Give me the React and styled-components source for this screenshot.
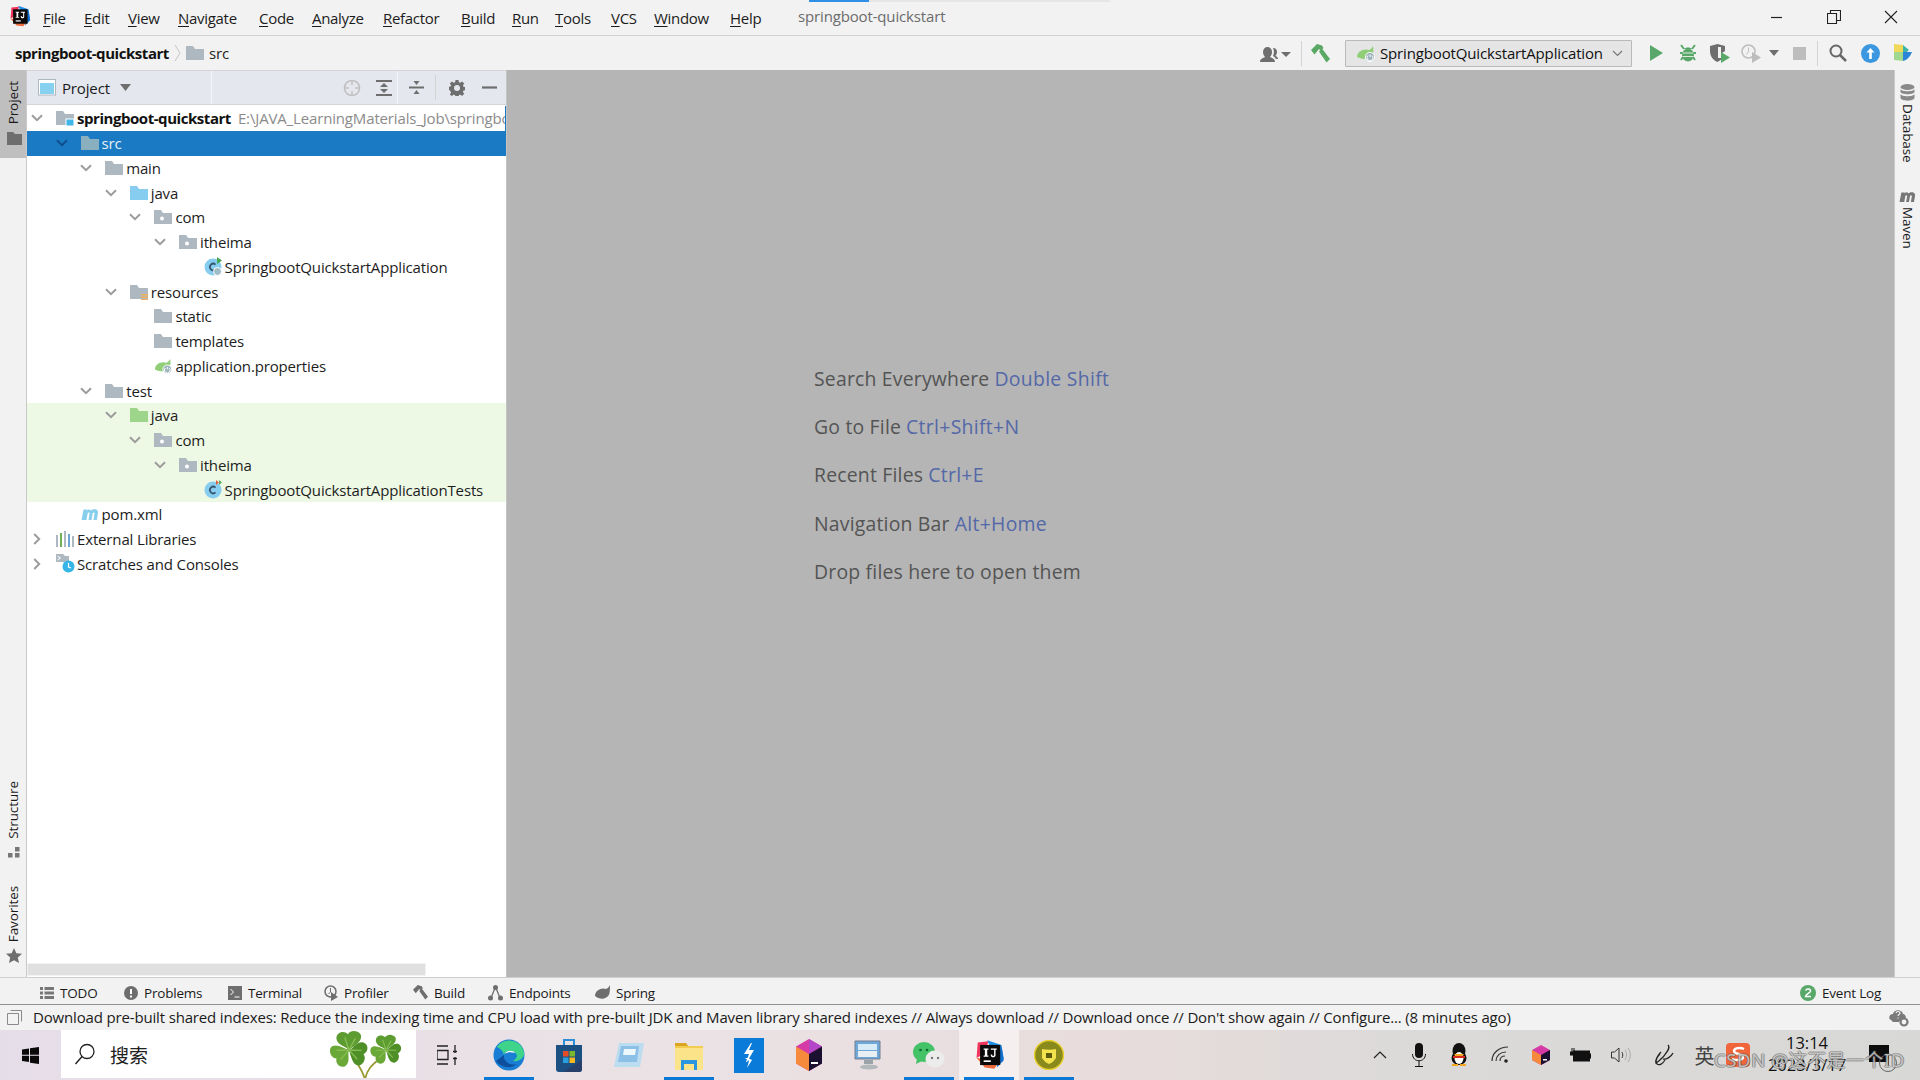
import React from "react";
import styled, { createGlobalStyle } from "styled-components";

const Global = createGlobalStyle`
  html, body { margin: 0; padding: 0; background: #f2f2f2; }
  * { box-sizing: border-box; }
  #root { width: 1920px; height: 1080px; }
`;
const UI = `"Open Sans", "Noto Sans", "Noto Sans CJK SC", sans-serif`;

const Screen = styled.div`
  position: relative; width: 1920px; height: 1080px; overflow: hidden; display: flex; flex-direction: column;
  font-family: ${UI}; font-size: 15px; letter-spacing: -0.15px; color: #1a1a1a; background: #f2f2f2;
`;
const TitleBar = styled.header`
  position: relative; height: 36px; flex: none; display: flex; align-items: center; padding: 2px 0 0 8px; border-bottom: 1px solid #d1d1d1;
`;
const Progress = styled.div`
  position: absolute; top: 0; left: 809px; width: 301px; height: 2px; background: #e6e6e6;
  &::before { content: ""; display: block; width: 60px; height: 2px; background: #2f8fe6; }
`;
const AppLogo = styled.div` width: 27px; height: 26px; flex: none; margin-top: -4px; display: flex; align-items: center; `;
const LogoGap = styled.div` width: 8px; flex: none; `;
const MenuItem = styled.span` width: ${p => p.$w}px; flex: none; white-space: nowrap; color: #1c1c1c; letter-spacing: -0.3px; margin-top: -1px; u { text-underline-offset: 2px; text-decoration-thickness: 1px; }`;
const WindowTitle = styled.span` color: #6b6b6b; flex: 1; margin-top: -5px; `;
const WinControls = styled.div` display: flex; align-items: center; margin-top: -3px; `;
const WinBtn = styled.div` width: 57.5px; height: 20px; display: flex; justify-content: center; align-items: center; `;

const NavBar = styled.nav`
  height: 34px; flex: none; display: flex; align-items: center; padding-left: 15px;
`;
const Crumb = styled.b` font-weight: 700; color: #111; letter-spacing: -0.45px; `;
const CrumbSep = styled.span` margin: 0 5px 0 5px; display: flex; `;
const CrumbLabel = styled.span` margin-left: 5px; color: #222; flex: 1; `;
const NavTools = styled.div` display: flex; align-items: center; height: 100%; `;
const NavSlot = styled.div` width: ${p => p.$w}px; flex: none; display: flex; justify-content: center; align-items: center; `;
const VSep = styled.div` width: 1px; height: 25px; background: #d4d4d4; flex: none; `;
const RunCombo = styled.div`
  width: 287px; height: 27px; flex: none; margin: 0 8px 0 6px; border: 1px solid #b9b9b9; background: #e5e5e5; border-radius: 1px;
  display: flex; align-items: center; gap: 4px; padding: 0 8px 0 10px; color: #111;
  span { flex: 1; }
`;

const Main = styled.div` flex: 1; min-height: 0; display: flex; `;
const Stripe = styled.aside`
  width: ${p => p.$w}px; flex: none; display: flex; flex-direction: column; justify-content: space-between; background: #f2f2f2;
  border-${p => p.$side}: 1px solid #c9c9c9; font-size: 13.500px; letter-spacing: -0.1px;
`;
const StripeGroup = styled.div` display: flex; flex-direction: column; padding-bottom: ${p => p.$pb || 0}px; `;
const StripeBtn = styled.div`
  display: flex; flex-direction: column; align-items: center; gap: ${p => p.$gap || 6}px; padding: ${p => p.$pad};
  background: ${p => p.$active ? "#bfbfbf" : "transparent"};
`;
const VText = styled.span`
  writing-mode: vertical-rl; transform: ${p => p.$flip ? "rotate(180deg)" : "none"}; line-height: 1; white-space: nowrap;
`;

const Panel = styled.section` width: 480px; flex: none; display: flex; flex-direction: column; background: #fff; border-right: 1px solid #c4c4c4; `;
const PanelHead = styled.div`
  height: 35px; flex: none; display: flex; align-items: center; background: #e4e7ee; border-top: 1px solid #d4d4d4; border-bottom: 1px solid #d4d4d4;
`;
const HeadCell = styled.div`
  width: ${p => p.$w}px; height: 100%; flex: none; display: flex; align-items: center; justify-content: ${p => p.$end ? "flex-end" : "flex-start"};
  padding-left: ${p => p.$pl || 0}px; border-right: 1px solid #f4f5f8;
`;
const HeadLabel = styled.span` margin-left: 6px; width: 58px; `;
const Tree = styled.div` flex: 1; min-height: 0; overflow: hidden; padding-top: 1px; `;
const Row = styled.div`
  position: relative; height: 24.75px; display: flex; align-items: center; white-space: nowrap; overflow: hidden; width: 478.5px;
  padding-left: ${p => p.$level * 24.6}px;
  background: ${p => p.$sel ? "#1a7ac4" : p.$test ? "#eef9e5" : "transparent"};
  color: ${p => p.$sel ? "#e8f1f8" : "#1d1d1d"};
`;
const Chev = styled.span` width: 20px; height: 16px; flex: none; display: flex; justify-content: center; align-items: center; `;
const RowIcon = styled.span` width: 21px; margin-left: 9px; flex: none; display: flex; align-items: center; `;
const RootName = styled.b` font-weight: 700; color: #111; letter-spacing: -0.45px; `;
const RootPath = styled.span` color: #8b8b8b; margin-left: 7px; `;
const RootMark = styled.span` position: absolute; right: 0; top: 0; width: 1px; height: 100%; background: #1a7ac4; `;
const HScroll = styled.div` height: 13px; width: 398.5px; flex: none; margin-bottom: 1px; background: #e0e0e0; border: 1px solid #f2f2f2; `;

const Editor = styled.main` flex: 1; min-width: 0; background: #b5b5b5; padding: 295px 0 0 307px; font-size: 19.4px; letter-spacing: 0.2px; color: #545454; `;
const Hint = styled.div` height: 48.2px; white-space: nowrap; `;
const Key = styled.span` color: #5468a8; margin-left: 5px; letter-spacing: 0.3px; `;

const ToolBar = styled.div`
  height: 27px; flex: none; display: flex; align-items: center; border-top: 1px solid #cfcfcf; font-size: 13.5px; letter-spacing: -0.2px; padding: 3px 38px 0 0;
`;
const ToolItem = styled.div` display: flex; align-items: center; gap: 6px; margin-left: ${p => p.$ml || 0}px; width: ${p => p.$w}px; flex: none; white-space: nowrap; `;
const Spring = styled.div` flex: 1; `;
const StatusBar = styled.div`
  height: 26px; flex: none; display: flex; align-items: center; padding: 0 11px 1px 7px; border-top: 1px solid #919191;
  span { flex: 1; margin-left: 11px; white-space: nowrap; color: #1b1b1b; letter-spacing: -0.16px; }
`;

const TaskBar = styled.footer`
  position: relative; height: 50px; flex: none; display: flex; align-items: center;
  background: linear-gradient(90deg, #e5dde8 0%, #ebe2e5 35%, #e8dcdc 58%, #dcdad9 72%, #d8d8d6 100%);
`;
const StartBtn = styled.div` width: 61px; height: 100%; flex: none; display: flex; justify-content: center; align-items: center; `;
const SearchBox = styled.div`
  width: 355px; height: 48px; align-self: flex-start; flex: none; background: #fff; display: flex; align-items: center; padding-left: 13px; gap: 14px;
  font-family: "Noto Sans CJK SC", sans-serif; font-size: 19px; letter-spacing: 0; color: #222; position: relative; overflow: hidden;
`;
const Clover = styled.div` position: absolute; left: 266px; top: 0; `;
const TaskApps = styled.div` display: flex; height: 100%; margin-left: 3px; `;
const TaskApp = styled.div`
  position: relative; width: 60px; height: 100%; flex: none; display: flex; justify-content: center; align-items: center;
  background: ${p => p.$active ? "#f5f0ef" : "transparent"};
  &::after { content: ""; display: ${p => p.$open ? "block" : "none"}; position: absolute; left: 5px; right: 5px; bottom: 0; height: 3px; background: #0a78d4; }
`;
const Tray = styled.div` flex: 1; display: flex; align-items: center; height: 100%; justify-content: flex-end; padding-right: 31px; `;
const TraySlot = styled.div` width: ${p => p.$w}px; flex: none; display: flex; justify-content: center; align-items: center; height: 100%; font-family: "Noto Sans CJK SC", sans-serif; font-size: 20px; color: #444; letter-spacing: 0; `;
const Clock = styled.div` width: 108px; flex: none; display: flex; flex-direction: column; align-items: center; font-size: 16.5px; letter-spacing: 0; line-height: 22px; color: #111; padding-bottom: 3px; white-space: nowrap; `;
const Notify = styled.div` position: relative; width: 20px; height: 17px; background: #0c0c0c; margin: 0 0 3px 8px; flex: none; `;
const NotifyBadge = styled.div`
  position: absolute; left: 10px; top: 9px; width: 18px; height: 18px; border-radius: 50%; border: 1px solid #666;
  display: flex; justify-content: center; align-items: center;
  &::after { content: ""; width: 2px; height: 8px; background: #333; }
`;
const Watermark = styled.div`
  position: absolute; z-index: 2; left: 1714px; top: 16px; font-size: 18.500px; letter-spacing: 0.6px; white-space: nowrap;
  color: rgba(255,255,255,.6); text-shadow: 1px 0 0 rgba(85,85,85,.55), -1px 0 0 rgba(85,85,85,.55), 0 1px 0 rgba(85,85,85,.4), 0 -1px 0 rgba(85,85,85,.4);
  font-family: "Noto Sans", "Noto Sans CJK SC", sans-serif;
`;

/* Icons */
const Folder = ({ c = "#aeb8c0", dot, badge }) => (
  <svg width="18" height="16" viewBox="0 0 18 16">
    <path d="M0 1h7l2 3h9v11H0z" fill={c} />
    {dot && <circle cx="8" cy="9.5" r="2" fill="#fff" />}
    {badge === "root" && <rect x="10" y="9" width="8" height="7" fill="#3fb5e8" stroke="#fff" />}
    {badge === "res" && <g fill="#f0b060"><rect x="11" y="10" width="7" height="1.5" /><rect x="11" y="12.5" width="7" height="1.5" /><rect x="11" y="15" width="7" height="1" /></g>}
  </svg>
);
const ChevDown = ({ c = "#9c9c9c" }) => <svg width="12" height="8" viewBox="0 0 12 8"><path d="M1 1.2l5 5 5-5" fill="none" stroke={c} strokeWidth="2" /></svg>;
const ChevRight = () => <svg width="8" height="12" viewBox="0 0 8 12"><path d="M1.2 1l5 5-5 5" fill="none" stroke="#9c9c9c" strokeWidth="2" /></svg>;
const ClassIcon = ({ test }) => (
  <svg width="19" height="19" viewBox="0 0 19 19">
    <circle cx="9" cy="10" r="8.5" fill="#86cdf0" />
    <path d="M11.5 7.6a3.3 3.3 0 1 0 0 4.8" fill="none" stroke="#35566e" strokeWidth="1.7" />
    {test ? <g><path d="M12 0v5l3-2.5z" fill="#e0603c" /><path d="M15 0v5l3-2.5z" fill="#5aab62" /></g> : <g><path d="M13 0v7l5-3.5z" fill="#45a84e" /><circle cx="13.5" cy="14.5" r="4" fill="#9fbcc8" stroke="#fff" /></g>}
  </svg>
);
const Leaf = ({ w = 20 }) => (
  <svg width={w} height={w * .85} viewBox="0 0 20 17">
    <path d="M1 12C1 6 8 3 13 5c2-1 3-2 4-4 1 5 0 9-3 11-4 3-9 2-13 0z" fill="#90cf78" />
    <circle cx="14" cy="12" r="4.6" fill="#9db4bd" stroke="#fff" />
    <path d="M14 9.5v2.500M12 10.5a3 3 0 1 0 4 0" fill="none" stroke="#fff" />
  </svg>
);
const Maven = ({ c = "#88cfee", w = 18 }) => (
  <svg width={w} height={w * .67} viewBox="0 0 18 12">
    <path d="M0.500 12L2.500 1.500h3.500l-.2 1C7 1 9 1 10 2.500 11.500 1 15 .5 16.500 2.500c.7 1 .6 2 .4 3L15.800 12h-3.300l1.100-6.500c.2-1.500-1.600-1.500-2 0L10.500 12H7.500l1.100-6.500c.2-1.500-1.600-1.500-2 0L5.500 12z" fill={c} />
  </svg>
);
const LibIcon = () => (
  <svg width="18" height="16" viewBox="0 0 18 16">
    <rect x="0" y="4" width="2" height="12" fill="#aeb8c0" /><rect x="4" y="2" width="2" height="14" fill="#72b257" />
    <rect x="8" y="0" width="2" height="16" fill="#aeb8c0" /><rect x="12" y="3" width="2" height="13" fill="#6aa5d8" /><rect x="16" y="5" width="2" height="11" fill="#aeb8c0" />
  </svg>
);
const ScratchIcon = () => (
  <svg width="19" height="19" viewBox="0 0 19 19">
    <path d="M0 0h7l2 2h4v6H0z" fill="#aeb8c0" /><path d="M1.500 2l3 2-3 2" stroke="#fff" fill="none" />
    <circle cx="12.500" cy="12.500" r="6" fill="#36b5e6" /><path d="M12.500 9v4l2.500 1" stroke="#fff" strokeWidth="1.200" fill="none" />
  </svg>
);
const IdeaLogo = ({ s = 27 }) => (
  <svg width={s} height={s} viewBox="0 0 27 27">
    <path d="M4 3l9-1-3 10-7 4z" fill="#f0355c" /><path d="M12 1l12 4 2 12-8-3z" fill="#1d8ee8" /><path d="M3 16l7 8 8 1 5-7z" fill="#ef6a3c" /><path d="M24 6l2 12-6 6z" fill="#126fd0" />
    <rect x="6" y="5" width="17" height="17" fill="#0a0a0a" />
    <path d="M9 8h4v1h-1v5h1v1H9v-1h1V9H9zM15 8h5v1h-1v5c0 1-1 1.500-2 1.500s-2-.5-2-1.500v-1l1.200 0v1c0 .3 1.600.3 1.600 0V9H15z" fill="#fff" />
    <rect x="9" y="18" width="6" height="1.400" fill="#fff" />
  </svg>
);
const Svg = ({ w, h = w, children }) => <svg width={w} height={h} viewBox={`0 0 ${w} ${h}`}>{children}</svg>;
const Gear = ({ c = "#6e6e6e", s = 16 }) => (
  <svg width={s} height={s} viewBox="0 0 16 16">
    <path fill={c} fillRule="evenodd" d="M6.500 0h3l.4 2.200 1.300.6L13.100 1.500l2.100 2.100-1.300 1.900.6 1.300 2.200.4v3l-2.200.4-.6 1.300 1.300 1.900-2.100 2.100-1.900-1.300-1.300.6-.4 2.200h-3l-.4-2.200-1.300-.6-1.900 1.300L.800 14.400l1.300-1.900-.6-1.300L0 9.800v-3l1.500-.3.600-1.300L.8 3.600 2.900 1.500l1.900 1.300 1.300-.6zM8 5a3 3 0 1 0 0 6 3 3 0 0 0 0-6z" />
  </svg>
);
const Hammer = ({ c = "#5aa863", s = 19 }) => (
  <svg width={s} height={s} viewBox="0 0 19 19">
    <path d="M0 6L6 0l5 1.500L12.500 4l-3 2.500L8 5 3.500 10.500z" fill={c} /><path d="M8 7.500l3-3L19 15l-3.500 3.500z" fill={c} />
  </svg>
);
const Heart = ({ t, fill = "#5c9c30" }) => (
  <g transform={t}>
    <path d="M0 0C-3 -4 -11 -4 -12 -11C-12 -17 -5 -19 -1 -15C1 -19 8 -19 11 -15C14 -9 5 -4 0 0z" fill={fill} />
    <path d="M0 0L-4 -12M0 0L6 -11" stroke="#86bb50" strokeWidth="1.400" fill="none" />
  </g>
);

const menu = [["File", 41], ["Edit", 44], ["View", 50], ["Navigate", 81], ["Code", 53], ["Analyze", 71], ["Refactor", 78], ["Build", 51], ["Run", 43], ["Tools", 56], ["VCS", 43], ["Window", 76], ["Help", 68]];

const App = () => (
  <Screen>
    <Global />
    <TitleBar>
      <Progress />
      <AppLogo><IdeaLogo s={23} /></AppLogo>
      <LogoGap />
      {menu.map(([m, w]) => <MenuItem key={m} $w={w}><u>{m[0]}</u>{m.slice(1)}</MenuItem>)}
      <WindowTitle>springboot-quickstart</WindowTitle>
      <WinControls>
        <WinBtn><Svg w={13}><path d="M1 6.500h11" stroke="#222" strokeWidth="1.200" /></Svg></WinBtn>
        <WinBtn><Svg w={14}><path d="M.5 3.500h9v10h-9zM3.500 3V.5h10v10H10" fill="none" stroke="#222" strokeWidth="1.100" /></Svg></WinBtn>
        <WinBtn><Svg w={14}><path d="M1 1l12 12M13 1L1 13" stroke="#222" strokeWidth="1.100" /></Svg></WinBtn>
      </WinControls>
    </TitleBar>
    <NavBar>
      <Crumb>springboot-quickstart</Crumb>
      <CrumbSep><Svg w={7} h={18}><path d="M1 1l5 8-5 8" fill="none" stroke="#c6c6c6" /></Svg></CrumbSep>
      <Folder />
      <CrumbLabel>src</CrumbLabel>
      <NavTools>
        <NavSlot $w={52}>
          <Svg w={31} h={17}>
            <path d="M0 17c0-3 3-4 5-5-1-1-2-3-2-5 0-3 2-5 4.500-5S12 4 12 7c0 2-1 4-2 5 2 1 5 2 5 5z" fill="#6e6e6e" />
            <path d="M13 3c3 0 4 2 4 4 0 2-1 3-1.500 4 1.500.5 2.500 1.500 2.500 3h-2c-1-2-3-3-3-3 1-2 1.500-5 0-8z" fill="#6e6e6e" />
            <path d="M21 7h10l-5 5z" fill="#6e6e6e" />
          </Svg>
        </NavSlot>
        <VSep />
        <NavSlot $w={37}><Hammer /></NavSlot>
        <RunCombo>
          <Leaf w={20} />
          <span>SpringbootQuickstartApplication</span>
          <Svg w={11} h={7}><path d="M1 1l4.500 4.500L10 1" fill="none" stroke="#777" strokeWidth="1.200" /></Svg>
        </RunCombo>
        <NavSlot $w={32}><Svg w={13} h={16}><path d="M0 0l13 8L0 16z" fill="#59a869" /></Svg></NavSlot>
        <NavSlot $w={32}>
          <Svg w={18}>
            <path d="M2 1l3 4M16 1l-3 4M1 9h3M14 9h3M2 16l2-3M16 16l-2-3" stroke="#59a869" strokeWidth="2" fill="none" />
            <path d="M5 5c1-2 7-2 8 0z" fill="#59a869" /><ellipse cx="9" cy="11" rx="6" ry="6.500" fill="#59a869" />
            <path d="M3.500 9h11M3.500 12.500h11" stroke="#dfeadf" strokeWidth="1.200" />
          </Svg>
        </NavSlot>
        <NavSlot $w={31}>
          <Svg w={20} h={19}>
            <path d="M0 2l7.500-2L15 2v5l-3 2v6l-4.500 3C3 16 0 12 0 7z" fill="#6e6e6e" /><path d="M8 3h3v11H8z" fill="#f2f2f2" />
            <path d="M11 8l9 5.500-9 5.500z" fill="#59a869" />
          </Svg>
        </NavSlot>
        <NavSlot $w={32}>
          <Svg w={20} h={19}>
            <circle cx="7.500" cy="7.500" r="6.500" fill="none" stroke="#bdbdbd" strokeWidth="1.500" /><path d="M7.500 3.500v4l-2 3" stroke="#bdbdbd" fill="none" />
            <path d="M11 8l9 5.500-9 5.500z" fill="#bdbdbd" />
          </Svg>
        </NavSlot>
        <NavSlot $w={14}><Svg w={10} h={6}><path d="M0 0h10L5 6z" fill="#6e6e6e" /></Svg></NavSlot>
        <NavSlot $w={36}><Svg w={13}><rect width="13" height="13" fill="#bdbdbd" /></Svg></NavSlot>
        <VSep />
        <NavSlot $w={39}>
          <Svg w={18}><circle cx="7" cy="7" r="5.500" fill="none" stroke="#666" strokeWidth="2" /><path d="M11 11l6 6" stroke="#666" strokeWidth="2.500" /></Svg>
        </NavSlot>
        <NavSlot $w={27}>
          <Svg w={19}><circle cx="9.500" cy="9.500" r="9.500" fill="#3a97e0" /><path d="M9.500 4l4 4.500h-2.700V15H8.200V8.500H5.500z" fill="#fff" /></Svg>
        </NavSlot>
        <NavSlot $w={36}>
          <Svg w={19} h={21}>
            <path d="M1 1l9 1 0 8H1z" fill="#f0d85a" /><path d="M10 2l6 5-6 5z" fill="#3cb4a8" /><path d="M1 9h9v9l-9-1z" fill="#a0d890" /><path d="M10 18V9h9c-2 5-5 8-9 9z" fill="#2a85d8" />
          </Svg>
        </NavSlot>
      </NavTools>
    </NavBar>
    <Main>
      <Stripe $w={27} $side="right">
        <StripeGroup>
          <StripeBtn $active $gap={8} $pad="11px 0 13px 2px">
            <VText $flip>Project</VText>
            <Svg w={15} h={13}><path d="M0 0h6l2 2h7v11H0z" fill="#6e6e6e" /></Svg>
          </StripeBtn>
        </StripeGroup>
        <StripeGroup $pb={13}>
          <StripeBtn $gap={7} $pad="0 0 28px 2px">
            <VText $flip>Structure</VText>
            <Svg w={12}><g fill="#777"><rect x="7" y="1" width="4.500" height="4.500" /><rect x="0" y="7" width="4.500" height="4.500" /><rect x="7" y="7" width="4.500" height="4.500" /></g></Svg>
          </StripeBtn>
          <StripeBtn $pad="0 0 0 2px">
            <VText $flip>Favorites</VText>
            <Svg w={16}><path d="M8 0l2.400 5.200 5.600.6-4.200 3.700 1.200 5.500L8 12.200 3 15l1.200-5.500L0 5.800l5.600-.6z" fill="#6e6e6e" /></Svg>
          </StripeBtn>
        </StripeGroup>
      </Stripe>
      <Panel>
        <PanelHead>
          <HeadCell $w={185} $pl={11}>
            <Svg w={18}><rect x=".5" y=".5" width="17" height="15.500" fill="#fff" stroke="#aeb8c0" /><rect x="2" y="4" width="14" height="11" fill="#86d0f0" /></Svg>
            <HeadLabel>Project</HeadLabel>
            <Svg w={11} h={7}><path d="M0 0h11L5.500 7z" fill="#6e6e6e" /></Svg>
          </HeadCell>
          <HeadCell $w={186} $end>
            <NavSlot $w={36}><Svg w={18}><circle cx="9" cy="9" r="7.500" fill="none" stroke="#c2c2c2" strokeWidth="1.700" /><path d="M9 1v5M9 12v5M1 9h5M12 9h5" stroke="#c2c2c2" strokeWidth="1.700" /></Svg></NavSlot>
            <NavSlot $w={27}><Svg w={16}><path d="M0 1h16M0 15h16" stroke="#6e6e6e" strokeWidth="2" /><path d="M8 3l4 4H4zM8 13l4-4H4z" fill="#6e6e6e" /></Svg></NavSlot>
          </HeadCell>
          <NavSlot $w={37}><Svg w={15}><path d="M0 7.500h15" stroke="#6e6e6e" strokeWidth="2" /><path d="M7.500 5l-3-4h6zM7.500 10l-3 4h6z" fill="#6e6e6e" /></Svg></NavSlot>
          <VSep />
          <NavSlot $w={42}><Gear /></NavSlot>
          <NavSlot $w={23}><Svg w={15} h={3}><path d="M0 1.500h15" stroke="#6e6e6e" strokeWidth="2.200" /></Svg></NavSlot>
        </PanelHead>
        <Tree>
          <Row $level={0}><Chev><ChevDown /></Chev><RowIcon><Folder badge="root" /></RowIcon><RootName>springboot-quickstart</RootName><RootPath>E:\JAVA_LearningMaterials_Job\springboot-quickstart</RootPath><RootMark /></Row>
          <Row $level={1} $sel><Chev><ChevDown c="#0f4e8c" /></Chev><RowIcon><Folder c="#8aafbf" /></RowIcon>src</Row>
          <Row $level={2}><Chev><ChevDown /></Chev><RowIcon><Folder /></RowIcon>main</Row>
          <Row $level={3}><Chev><ChevDown /></Chev><RowIcon><Folder c="#86cdf0" /></RowIcon>java</Row>
          <Row $level={4}><Chev><ChevDown /></Chev><RowIcon><Folder dot /></RowIcon>com</Row>
          <Row $level={5}><Chev><ChevDown /></Chev><RowIcon><Folder dot /></RowIcon>itheima</Row>
          <Row $level={6}><Chev /><RowIcon><ClassIcon /></RowIcon>SpringbootQuickstartApplication</Row>
          <Row $level={3}><Chev><ChevDown /></Chev><RowIcon><Folder badge="res" /></RowIcon>resources</Row>
          <Row $level={4}><Chev /><RowIcon><Folder /></RowIcon>static</Row>
          <Row $level={4}><Chev /><RowIcon><Folder /></RowIcon>templates</Row>
          <Row $level={4}><Chev /><RowIcon><Leaf w={19} /></RowIcon>application.properties</Row>
          <Row $level={2}><Chev><ChevDown /></Chev><RowIcon><Folder /></RowIcon>test</Row>
          <Row $level={3} $test><Chev><ChevDown /></Chev><RowIcon><Folder c="#9dd58a" /></RowIcon>java</Row>
          <Row $level={4} $test><Chev><ChevDown /></Chev><RowIcon><Folder dot /></RowIcon>com</Row>
          <Row $level={5} $test><Chev><ChevDown /></Chev><RowIcon><Folder dot /></RowIcon>itheima</Row>
          <Row $level={6} $test><Chev /><RowIcon><ClassIcon test /></RowIcon>SpringbootQuickstartApplicationTests</Row>
          <Row $level={1}><Chev /><RowIcon><Maven /></RowIcon>pom.xml</Row>
          <Row $level={0}><Chev><ChevRight /></Chev><RowIcon><LibIcon /></RowIcon>External Libraries</Row>
          <Row $level={0}><Chev><ChevRight /></Chev><RowIcon><ScratchIcon /></RowIcon>Scratches and Consoles</Row>
        </Tree>
        <HScroll />
      </Panel>
      <Editor>
        <Hint>Search Everywhere<Key>Double Shift</Key></Hint>
        <Hint>Go to File<Key>Ctrl+Shift+N</Key></Hint>
        <Hint>Recent Files<Key>Ctrl+E</Key></Hint>
        <Hint>Navigation Bar<Key>Alt+Home</Key></Hint>
        <Hint>Drop files here to open them</Hint>
      </Editor>
      <Stripe $w={26} $side="left">
        <StripeGroup>
          <StripeBtn $gap={3} $pad="14px 0 0 0">
            <Svg w={15} h={17}><ellipse cx="7.500" cy="3" rx="7" ry="3" fill="#8a8a8a" /><path d="M.5 5c1 3 13 3 14 0v3c-1 3-13 3-14 0zM.5 10c1 3 13 3 14 0v4c-1 3.500-13 3.500-14 0z" fill="#8a8a8a" /></Svg>
            <VText>Database</VText>
          </StripeBtn>
          <StripeBtn $gap={5} $pad="28px 0 0 0"><Maven c="#777" w={17} /><VText>Maven</VText></StripeBtn>
        </StripeGroup>
      </Stripe>
    </Main>
    <ToolBar>
      <ToolItem $ml={40} $w={84}><Svg w={14} h={12}><g fill="#777"><path d="M0 0h3v3H0zM0 4.500h3v3H0zM0 9h3v3H0zM4.500 0H14v3H4.500zM4.500 4.500H14v3H4.500zM4.500 9H14v3H4.500z" /></g></Svg>TODO</ToolItem>
      <ToolItem $w={104}><Svg w={14}><circle cx="7" cy="7" r="7" fill="#6e6e6e" /><path d="M6 3h2v5H6zM6 9.500h2v2H6z" fill="#fff" /></Svg>Problems</ToolItem>
      <ToolItem $w={96}><Svg w={14}><rect width="14" height="14" fill="#6e6e6e" /><path d="M2.500 3l3 3-3 3M6.500 11h5" stroke="#fff" fill="none" /></Svg>Terminal</ToolItem>
      <ToolItem $w={89}><Svg w={14} h={16}><circle cx="6.500" cy="6.500" r="5.500" fill="none" stroke="#6e6e6e" strokeWidth="1.500" /><path d="M6.500 3v4l-2 2" stroke="#6e6e6e" fill="none" /><path d="M7 7l7 5-7 4z" fill="#6e6e6e" /></Svg>Profiler</ToolItem>
      <ToolItem $w={75}><Hammer c="#6e6e6e" s={15} />Build</ToolItem>
      <ToolItem $w={107}><Svg w={15} h={16}><g fill="#6e6e6e"><circle cx="7.500" cy="2.500" r="2.500" /><circle cx="2.500" cy="13" r="2.500" /><circle cx="12.500" cy="13" r="2.500" /></g><path d="M7 3L3 13M8 3l4 10" stroke="#6e6e6e" strokeWidth="1.300" /></Svg>Endpoints</ToolItem>
      <ToolItem $w={60}><Svg w={15}><path d="M0 11C0 5 7 2 11 4c2-1 3-2 4-4 0 6 0 10-3 12-4 3-8 2-12-1z" fill="#6e6e6e" /></Svg>Spring</ToolItem>
      <Spring />
      <ToolItem $w={82}>
        <Svg w={16}><circle cx="8" cy="8" r="8" fill="#59a869" /><path d="M5.500 5.500c1-2 5-2 5 .5 0 2-5 3-5 5.500h5.500" fill="none" stroke="#fff" strokeWidth="1.500" /></Svg>
        Event Log
      </ToolItem>
    </ToolBar>
    <StatusBar>
      <Svg w={15} h={15}><path d="M3.500 .5h11v11M.5 3.500h11v11H.5z" fill="none" stroke="#8a8a8a" /></Svg>
      <span>Download pre-built shared indexes: Reduce the indexing time and CPU load with pre-built JDK and Maven library shared indexes // Always download // Download once // Don't show again // Configure... (8 minutes ago)</span>
      <Svg w={20} h={20}>
        <path d="M2 13c-3-1-2-6 2-6 1-5 9-5 10 0 2 0 4 3 2 5-2-1-5 0-6 3H4z" fill="#7a7a7a" /><path d="M7 6c.5-2 4-2 4 0 0 1.500-2 1.500-2 3M9 10.500v1" stroke="#f2f2f2" strokeWidth="1.200" fill="none" />
        <circle cx="15" cy="15" r="3.500" fill="none" stroke="#7a7a7a" strokeWidth="2.200" />
      </Svg>
    </StatusBar>
    <TaskBar>
      <StartBtn><Svg w={17}><path d="M0 2.400L7 1.400v6.300H0zM8 1.300L17 0v7.700H8zM0 8.700h7v6.400l-7-1zM8 8.700h9V17l-9-1.300z" fill="#0a0a0a" /></Svg></StartBtn>
      <SearchBox>
        <Svg w={22}><circle cx="13" cy="8.500" r="7" fill="none" stroke="#222" strokeWidth="1.300" /><path d="M8 13.500L1.500 21" stroke="#222" strokeWidth="1.400" /></Svg>
        搜索
        <Clover>
          <svg width="80" height="50" viewBox="0 0 80 50">
            <path d="M24 24c5 8 12 16 14 26M58 24c-8 8-18 12-20 26" fill="none" stroke="#9a9a30" strokeWidth="1.800" />
            <Heart t="translate(22 20) scale(1.050)" />
            <Heart t="translate(22 20) rotate(110) scale(1)" fill="#4f8f28" />
            <Heart t="translate(22 20) rotate(-120) scale(1)" fill="#6aa838" />
            <Heart t="translate(59 20) scale(.85)" />
            <Heart t="translate(59 20) rotate(110) scale(.82)" fill="#4f8f28" />
            <Heart t="translate(59 20) rotate(-120) scale(.82)" fill="#6aa838" />
          </svg>
        </Clover>
      </SearchBox>
      <TaskApps>
        <TaskApp>
          <Svg w={24} h={20}><g fill="none" stroke="#222" strokeWidth="1.300"><path d="M0 1h11M0 19h11M0 5.500h11v9H0z" /><path d="M18 0v8M18 12v8" /><path d="M16 6.500h4M16 13.500h4" /></g></Svg>
        </TaskApp>
        <TaskApp $open>
          <Svg w={32}>
            <circle cx="16" cy="16" r="15.500" fill="#1a7fd4" /><path d="M4 8C9-1 27-2 31 13c1 6-5 10-11 9 5-3 5-7 1-9-3-2-9-2-10 3-1-4-3-6-7-8z" fill="#3ed58a" />
            <path d="M11 16c-1 7 7 11 13 9-5 5-16 4-21-3z" fill="#0d4f9c" /><path d="M12 15c1-4 8-4 10-1-4-1-8-1-10 1z" fill="#fff" />
          </Svg>
        </TaskApp>
        <TaskApp>
          <Svg w={28} h={34}>
            <path d="M9 7V2h10v5" fill="none" stroke="#2a8fd8" strokeWidth="2" /><path d="M1 7h26v24c0 2-1 3-3 3H4c-2 0-3-1-3-3z" fill="#1c4f82" /><path d="M27 22v9c0 2-1 3-3 3H8z" fill="#27406b" />
            <rect x="8" y="13" width="5.500" height="5.500" fill="#e44d26" /><rect x="14.500" y="13" width="5.500" height="5.500" fill="#7cb82f" /><rect x="8" y="19.500" width="5.500" height="5.500" fill="#2a9fe0" /><rect x="14.500" y="19.500" width="5.500" height="5.500" fill="#f5b91e" />
          </Svg>
        </TaskApp>
        <TaskApp>
          <Svg w={30} h={28}>
            <path d="M5 2l25 0-4 24H0z" fill="#bcdcf0" /><path d="M7 5h18l-2 16H4z" fill="#8cc0e6" /><path d="M10 8h12l-1 6H9z" fill="#eef7fc" />
          </Svg>
        </TaskApp>
        <TaskApp $open>
          <Svg w={28} h={30}>
            <path d="M0 3h11l2 3h15v24H0z" fill="#f3cb4f" /><path d="M0 3h11l2 3H0z" fill="#d9a522" /><path d="M0 8h28v22H0z" fill="#fbe38a" />
            <path d="M6 20h16v10h-3v-6H9v6H6z" fill="#2a96e0" />
          </Svg>
        </TaskApp>
        <TaskApp>
          <Svg w={30} h={35}><rect width="30" height="35" fill="#0a7bd8" /><path d="M17 5l-7 11h5l-3 8 1 0 7-12h-5l3-7zM11 20l4 3-2 7 5-8-4-2z" fill="#fff" /></Svg>
        </TaskApp>
        <TaskApp>
          <Svg w={26} h={32}>
            <path d="M13 0l13 7.500v17L13 32 0 24.500v-17z" fill="#d63aa6" /><path d="M13 0l13 7.500L13 15z" fill="#b446c8" /><path d="M0 7.500L13 15v17L0 24.500z" fill="#f58a3c" />
            <path d="M13 15l13-7.500v17L13 32z" fill="#1b1030" /><rect x="15" y="23" width="7" height="2" fill="#fff" />
          </Svg>
        </TaskApp>
        <TaskApp>
          <Svg w={30}>
            <path d="M1 1h25v18H1z" fill="#6fa8d8" stroke="#6e7e90" /><path d="M4 4h19v6H4z" fill="#d8ecf8" />
            <path d="M4 11l19 0v6H4z" fill="#e8eef2" /><path d="M10 20h9v4h-9z" fill="#9aa4aa" /><ellipse cx="15" cy="27" rx="9" ry="2.500" fill="#b2b8bc" />
          </Svg>
        </TaskApp>
        <TaskApp $open>
          <Svg w={32} h={28}>
            <ellipse cx="11" cy="11" rx="11" ry="10" fill="#43c267" /><path d="M4 17l-1 6 6-3z" fill="#43c267" />
            <circle cx="7.500" cy="9" r="1.300" fill="#0f6b32" /><circle cx="14" cy="9" r="1.300" fill="#0f6b32" />
            <ellipse cx="22" cy="18" rx="9.500" ry="8.500" fill="#ececec" /><circle cx="19" cy="17" r="1.200" fill="#777" /><circle cx="25" cy="17" r="1.200" fill="#777" />
          </Svg>
        </TaskApp>
        <TaskApp $open $active><IdeaLogo s={32} /></TaskApp>
        <TaskApp $open>
          <Svg w={30}>
            <circle cx="15" cy="15" r="14.500" fill="#8a8a1c" stroke="#e8d030" strokeWidth="1.500" />
            <path d="M8 9c5 1 10 1 14 0v9c-2 3-4 5-7 6-3-1-5-3-7-6z" fill="#f2e24e" /><rect x="12" y="13" width="6" height="5" fill="#5a5a10" />
          </Svg>
        </TaskApp>
      </TaskApps>
      <Tray>
        <TraySlot $w={39}><Svg w={14} h={8}><path d="M1 7l6-6 6 6" fill="none" stroke="#222" strokeWidth="1.200" /></Svg></TraySlot>
        <TraySlot $w={40}><Svg w={14} h={24}><rect x="3" y="0" width="8" height="15" rx="4" fill="#111" /><path d="M.5 11c0 9 13 9 13 0M7 18v5M3 23.500h8" fill="none" stroke="#111" /></Svg></TraySlot>
        <TraySlot $w={40}>
          <Svg w={20} h={24}>
            <ellipse cx="10" cy="8" rx="6.500" ry="8" fill="#111" /><ellipse cx="10" cy="15" rx="7.500" ry="7" fill="#111" /><ellipse cx="10" cy="15" rx="4.500" ry="6" fill="#fff" />
            <path d="M5 11h10l-2 3H7z" fill="#f5a61e" /><path d="M3 21h6v2H3zM11 21h6v2h-6z" fill="#f5a61e" /><path d="M4 13h12v2H4z" fill="#d82a20" />
          </Svg>
        </TraySlot>
        <TraySlot $w={42}><Svg w={18} h={18}><g fill="none" stroke="#333" strokeWidth="1.200"><path d="M1 15C1 7 8 1 17 1" /><path d="M5 15c0-5 4-9 10-9" /><path d="M9 15c0-3 2-5 5-5" /></g><circle cx="15" cy="15" r="1.800" fill="#222" /></Svg></TraySlot>
        <TraySlot $w={39}>
          <Svg w={18} h={20}><path d="M9 0l9 5v10l-9 5-9-5V5z" fill="#d63aa6" /><path d="M0 5l9 5v10l-9-5z" fill="#f58a3c" /><path d="M9 10l9-5v10l-9 5z" fill="#1b1030" /><rect x="11" y="14" width="4" height="1.500" fill="#fff" /></Svg>
        </TraySlot>
        <TraySlot $w={40}><Svg w={21} h={16}><rect x="3.500" y="4" width="16" height="10" fill="#111" stroke="#111" /><path d="M20 7h1v4h-1zM0 5h5v3H0zM2 1v4M4 1v4" stroke="#111" fill="#111" /></Svg></TraySlot>
        <TraySlot $w={42}><Svg w={21} h={16}><path d="M.5 5h3L8 1v14l-4.500-4h-3z" fill="none" stroke="#333" /><path d="M11 5c1 2 1 4 0 6" fill="none" stroke="#333" /><path d="M14 3c2 3 2 7 0 10M17 1c3 4 3 10 0 14" fill="none" stroke="#aaa" /></Svg></TraySlot>
        <TraySlot $w={44}><Svg w={20} h={22}><path d="M14 1c3 3-2 8-5 12-3 3-5 5-7 6-1-3 2-8 5-11M6 10c-3 3-5 7-3 10 3 2 6-1 8-4" fill="none" stroke="#222" strokeWidth="1.300" /><path d="M9 15c3 1 8-2 10-6" fill="none" stroke="#222" strokeWidth="1.300" /></Svg></TraySlot>
        <TraySlot $w={37}>英</TraySlot>
        <TraySlot $w={30}>
          <Svg w={24}><rect width="24" height="24" rx="4" fill="#f0653a" /><path d="M18 6c-4-2-10-1-10 2 0 4 9 2 9 6 0 3-6 4-11 2" fill="none" stroke="#fff" strokeWidth="2.400" /></Svg>
        </TraySlot>
        <Clock><span>13:14</span><span>2023/3/17</span></Clock>
        <Notify><NotifyBadge /></Notify>
      </Tray>
      <Watermark>CSDN @这不是一个ID</Watermark>
    </TaskBar>
  </Screen>
);

export default App;
